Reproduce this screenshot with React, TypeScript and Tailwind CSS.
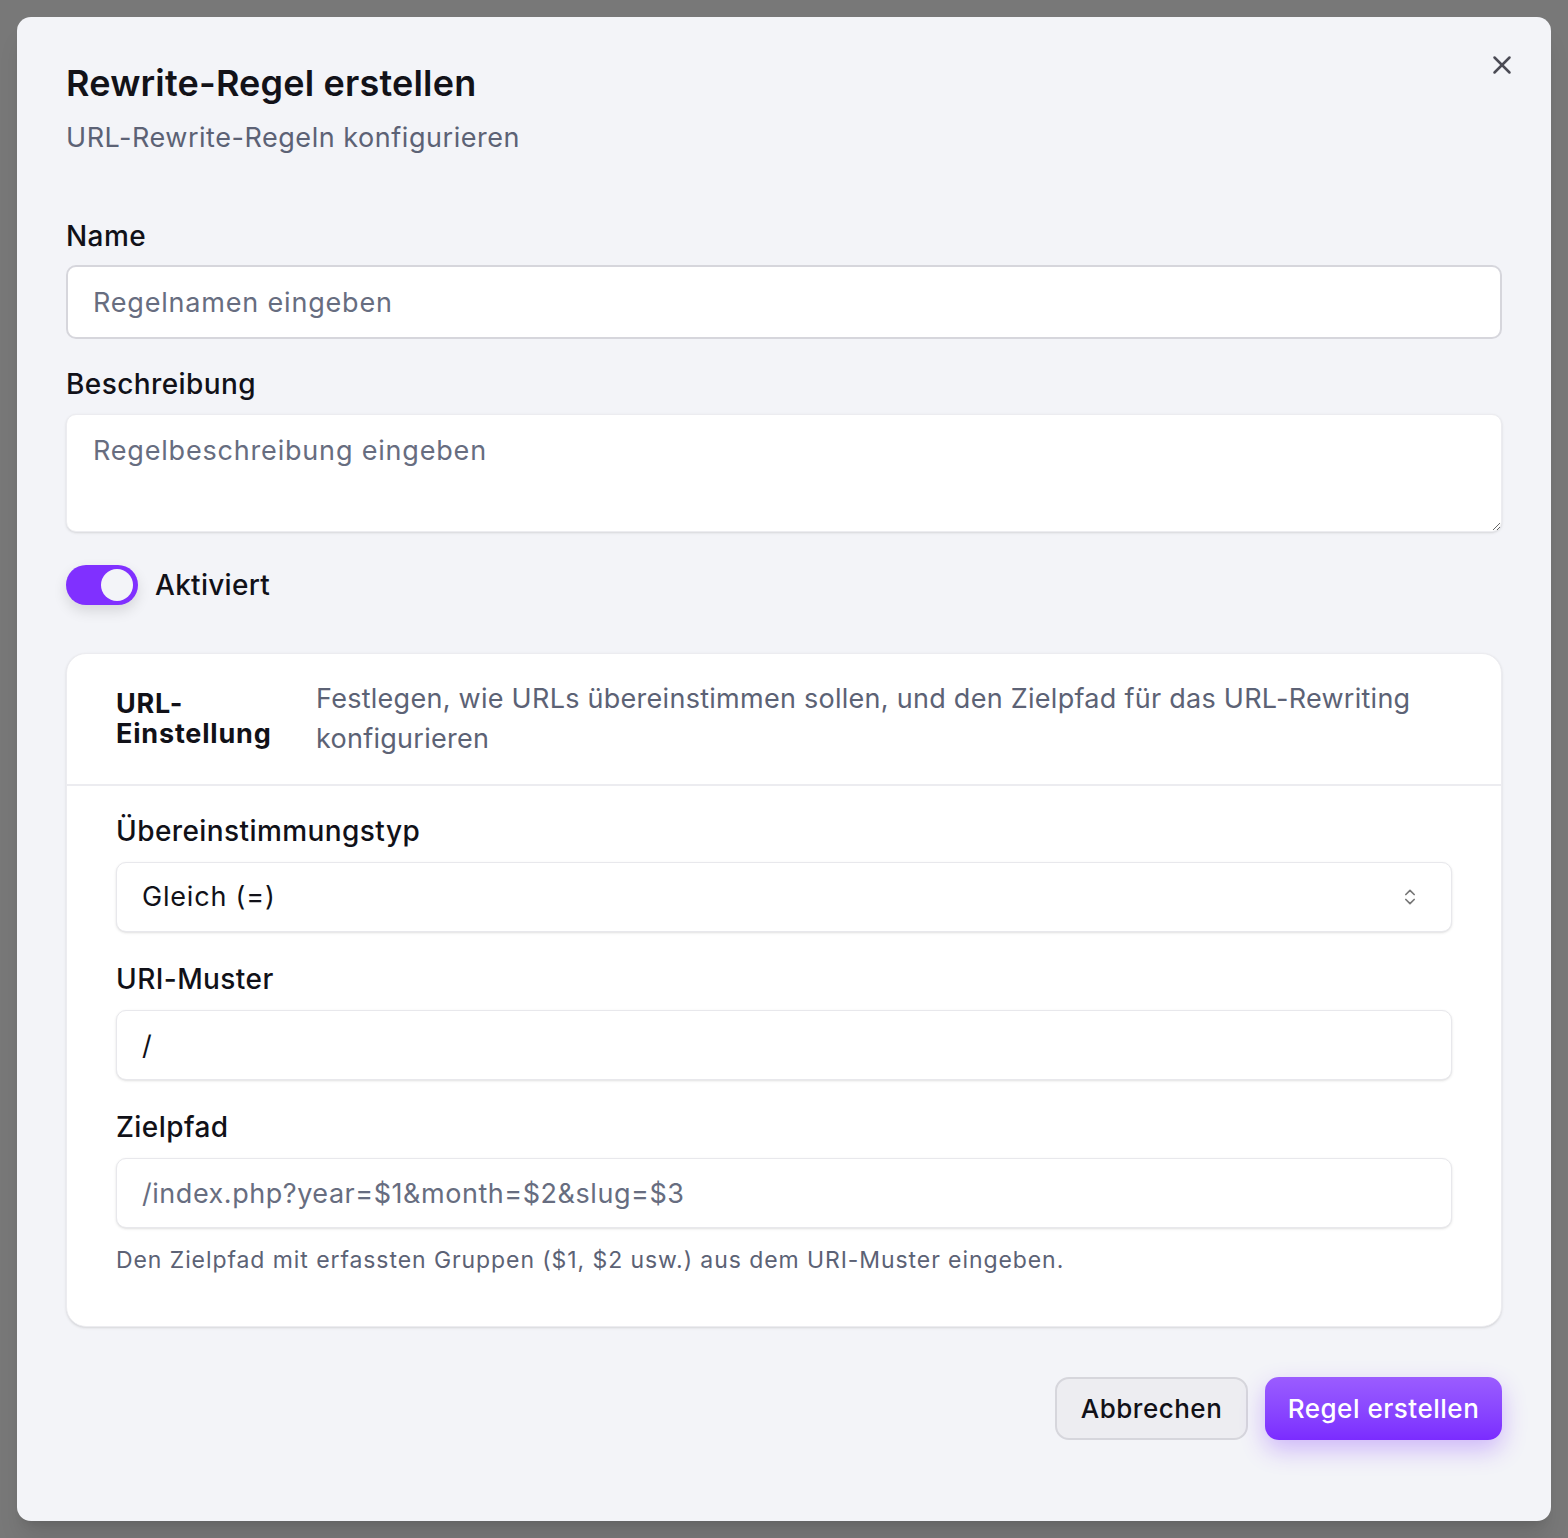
import { X, ChevronsUpDown } from "lucide-react"

const font = { fontFamily: "Inter, 'Noto Sans', sans-serif" }

function Label({ children }: { children: React.ReactNode }) {
  return <label className="block text-[28px] leading-[36px] font-medium text-[#111118] tracking-[0.015em]">{children}</label>
}

export default function App() {
  return (
    <div className="min-h-[1538px] w-full bg-[#787878] p-[17px]" style={font}>
      <div className="relative h-[1504px] rounded-[14px] bg-[#f3f4f8] px-[49px] pt-[44px] shadow-xl">
        <button className="absolute right-[29px] top-[28px] p-[5px] text-[#4b4b55]">
          <X className="w-[30px] h-[30px]" strokeWidth={2} />
        </button>

        <h2 className="text-[36px] leading-[44px] font-semibold text-[#121218] tracking-[0.005em]">Rewrite-Regel erstellen</h2>
        <p className="mt-[15px] text-[27px] leading-[36px] text-[#5c6275] tracking-[0.02em]">URL-Rewrite-Regeln konfigurieren</p>

        <div className="mt-[62px]">
          <Label>Name</Label>
          <input
            placeholder="Regelnamen eingeben"
            className="mt-[11px] block w-full h-[74px] rounded-[10px] border-2 border-[#d6d6dc] bg-white px-[25px] text-[27px] tracking-[0.03em] text-[#111118] placeholder:text-[#676d80] outline-none"
          />
        </div>

        <div className="mt-[27px]">
          <Label>Beschreibung</Label>
          <textarea
            placeholder="Regelbeschreibung eingeben"
            className="mt-[12px] block w-full h-[118px] rounded-[10px] border border-[#ececf0] bg-white px-[26px] py-[18px] text-[27px] leading-[36px] tracking-[0.03em] text-[#111118] placeholder:text-[#676d80] outline-none shadow-sm"
          />
        </div>

        <div className="mt-[33px] flex items-center gap-[17px]">
          <div className="relative w-[72px] h-[40px] rounded-full bg-[#8030ff] shadow-[0_6px_14px_rgba(0,0,0,0.12)]">
            <span className="absolute right-[5px] top-[4px] w-[32px] h-[32px] rounded-full bg-[#f3f4f8]" />
          </div>
          <span className="text-[28px] leading-[36px] font-medium text-[#111118] tracking-[0.01em]">Aktiviert</span>
        </div>

        <div className="mt-[48px] rounded-[20px] border border-[#ececf0] bg-white shadow-sm">
          <div className="flex items-center gap-[26px] px-[49px] py-[25px] border-b-2 border-[#ececf0]">
            <div className="w-[174px] shrink-0 text-[27px] leading-[30px] font-bold text-[#111118] tracking-[0.03em]">
              <span className="block">URL-</span>
              <span className="block">Einstellung</span>
            </div>
            <p className="text-[27px] leading-[40px] text-[#5c6275] tracking-[0.01em]">
              Festlegen, wie URLs übereinstimmen sollen, und den Zielpfad für das URL-Rewriting konfigurieren
            </p>
          </div>

          <div className="px-[49px] pt-[27px] pb-[50px]">
            <Label>Übereinstimmungstyp</Label>
            <div className="mt-[13px] flex items-center justify-between h-[70px] rounded-[10px] border border-[#e8e8ec] bg-white px-[25px] shadow-sm">
              <span className="text-[27px] tracking-[0.03em] text-[#111118]">Gleich (=)</span>
              <ChevronsUpDown className="w-[20px] h-[20px] text-[#777] mr-[6px]" strokeWidth={2} />
            </div>

            <div className="mt-[29px]">
              <Label>URI-Muster</Label>
              <input
                defaultValue="/"
                className="mt-[13px] block w-full h-[70px] rounded-[10px] border border-[#e8e8ec] bg-white px-[25px] text-[27px] text-[#111118] outline-none shadow-sm"
              />
            </div>

            <div className="mt-[29px]">
              <Label>Zielpfad</Label>
              <input
                placeholder="/index.php?year=$1&month=$2&slug=$3"
                className="mt-[13px] block w-full h-[70px] rounded-[10px] border border-[#e8e8ec] bg-white px-[25px] text-[27px] tracking-[0.02em] text-[#111118] placeholder:text-[#676d80] outline-none shadow-sm"
              />
            </div>

            <p className="mt-[16px] text-[23px] leading-[32px] text-[#5c6275] tracking-[0.04em]">
              Den Zielpfad mit erfassten Gruppen ($1, $2 usw.) aus dem URI-Muster eingeben.
            </p>
          </div>
        </div>

        <div className="mt-[50px] flex justify-end gap-[17px]">
          <button className="h-[63px] w-[193px] rounded-[14px] border-2 border-[#d6d6dc] bg-[#ededf1] text-[26px] font-medium text-[#111118] tracking-[0.02em]">
            Abbrechen
          </button>
          <button className="h-[63px] w-[237px] rounded-[14px] bg-gradient-to-b from-[#9b5cff] to-[#7b2bff] text-[26px] font-medium text-white tracking-[0.02em] shadow-[0_10px_24px_rgba(124,44,255,0.3)]">
            Regel erstellen
          </button>
        </div>
      </div>
    </div>
  )
}
